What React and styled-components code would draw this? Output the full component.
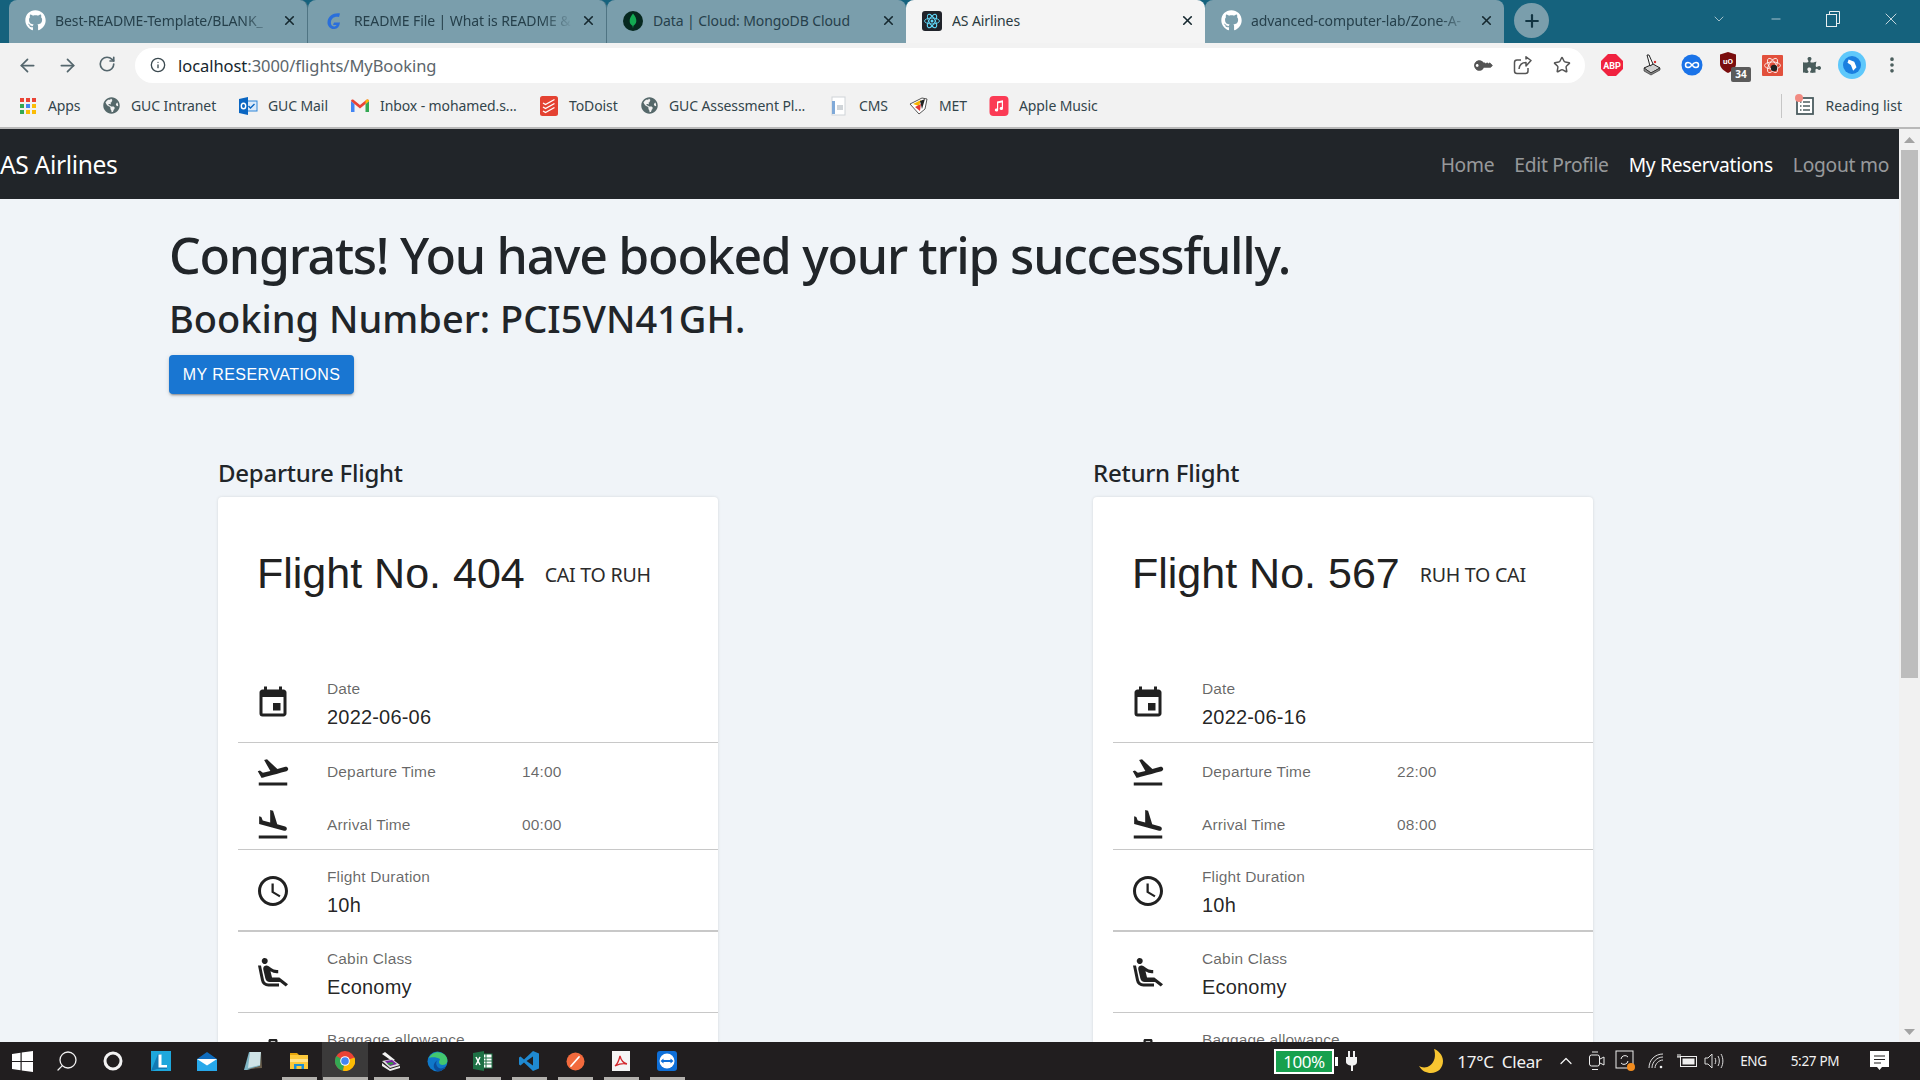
import React from "react";
import styled, { createGlobalStyle } from "styled-components";
import { ArrowLeft, ArrowRight, RotateCw, Search, ChevronUp, ChevronDown, Minus, X, Plus, Star, Info, MoreVertical } from "lucide-react";
import { FaGithub, FaGlobeAmericas, FaKey, FaPuzzlePiece } from "react-icons/fa";
import {
  MdEvent,
  MdFlightTakeoff,
  MdFlightLand,
  MdAccessTime,
  MdAirlineSeatReclineExtra,
  MdLuggage,
} from "react-icons/md";

const uiFont = `"Noto Sans", "Open Sans", sans-serif`;
const cardFont = `"Liberation Sans", Arial, sans-serif`;

const GlobalStyle = createGlobalStyle`
  html, body {
    margin: 0;
    padding: 0;
    height: 100%;
    overflow: hidden;
    background: #f0f4f8;
  }
  * { box-sizing: border-box; }
`;

const Screen = styled.div`
  width: 1920px;
  height: 1080px;
  display: flex;
  flex-direction: column;
  overflow: hidden;
  font-family: ${uiFont};
`;

/* browser chrome */
const TabStrip = styled.div`
  height: 43px;
  flex: none;
  background: #15627d;
  display: flex;
  padding-left: 9px;
`;

const Tab = styled.div`
  width: 299px;
  height: 43px;
  display: flex;
  align-items: center;
  padding: 0 0 2px 15px;
  position: relative;
  border-radius: 8px 8px 0 0;
  background: ${(p) => (p.$active ? "#f4f4f4" : "#7a9eac")};
  color: ${(p) => (p.$active ? "#2b3a40" : "#26404b")};
  &:not(:last-of-type) {
    border-right: ${(p) => (p.$sep ? "1px solid #4f7483" : "none")};
  }
`;

const TabIcon = styled.div`
  width: 22px;
  height: 22px;
  flex: none;
  display: flex;
  align-items: center;
  justify-content: center;
  color: #fff;
`;

const TabTitle = styled.div`
  margin-left: 9px;
  width: 219px;
  font-size: 14px;
  letter-spacing: -0.1px;
  white-space: nowrap;
  overflow: hidden;
  mask-image: ${(p) => (p.$fade ? "linear-gradient(to right, #000 86%, transparent)" : "none")};
`;

const TabClose = styled.div`
  margin-left: auto;
  margin-right: 10px;
  display: flex;
  color: #16282f;
`;

const NewTab = styled.div`
  width: 35px;
  height: 35px;
  margin: 3px 0 0 10px;
  border-radius: 50%;
  background: #7a9eac;
  display: flex;
  align-items: center;
  justify-content: center;
  color: #123543;
`;

const WindowControls = styled.div`
  margin-left: auto;
  display: flex;
  align-items: flex-start;
  color: #e8eef0;
`;

const WinButton = styled.div`
  width: ${(p) => p.$w || 58}px;
  height: 38px;
  display: flex;
  align-items: center;
  justify-content: center;
`;

const Toolbar = styled.div`
  height: 44px;
  flex: none;
  background: #f2f2f2;
  display: flex;
  align-items: center;
`;

const NavButton = styled.div`
  width: 40px;
  display: flex;
  justify-content: center;
  color: #54666d;
`;

const NavButtons = styled.div`
  display: flex;
  padding-left: 7px;
  width: 135px;
`;

const Omnibox = styled.div`
  width: 1450px;
  height: 35px;
  background: #fff;
  border-radius: 18px;
  display: flex;
  align-items: center;
  padding: 0 3px 0 15px;
  font-size: 16.5px;
  letter-spacing: -0.05px;
  color: #5c666b;
`;

const UrlHost = styled.span`
  color: #16262d;
`;

const UrlText = styled.div`
  margin-left: 12px;
`;

const OmniActions = styled.div`
  margin-left: auto;
  display: flex;
  color: #555;
`;

const OmniButton = styled.div`
  width: 40px;
  display: flex;
  justify-content: center;
  align-items: center;
`;

const Extensions = styled.div`
  display: flex;
  margin-left: 7px;
`;

const Extension = styled.div`
  width: 40px;
  height: 30px;
  display: flex;
  align-items: center;
  justify-content: center;
  position: relative;
`;

const ExtBadge = styled.div`
  position: absolute;
  left: 19px;
  top: 17px;
  width: 20px;
  height: 15px;
  border-radius: 2px;
  background: #5b5b5b;
  color: #fff;
  font-size: 10px;
  font-weight: 700;
  line-height: 15px;
  text-align: center;
`;

const Avatar = styled.div`
  width: 28px;
  height: 28px;
  border-radius: 50%;
  background: #5ec8fb;
  display: flex;
  align-items: center;
  justify-content: center;
`;

const Bookmarks = styled.div`
  height: 42px;
  flex: none;
  background: #f2f2f2;
  border-bottom: 2px solid #b9b9b9;
  display: flex;
  align-items: center;
  padding: 0 0 3px 18px;
`;

const Bookmark = styled.div`
  display: flex;
  align-items: center;
  margin-right: 20px;
  font-size: 14px;
  letter-spacing: -0.1px;
  color: #33454c;
`;

const BookmarkIcon = styled.div`
  width: 20px;
  height: 20px;
  display: flex;
  align-items: center;
  justify-content: center;
  margin-right: 10px;
  color: #55686a;
`;

const BookmarkLabel = styled.div`
  width: ${(p) => p.$w}px;
  white-space: nowrap;
`;

const ReadingList = styled.div`
  margin-left: auto;
  padding-left: 13px;
  padding-right: 18px;
  height: 24px;
  border-left: 1px solid #c6c6c6;
  display: flex;
  align-items: center;
  font-size: 14px;
  letter-spacing: 0;
  color: #33454c;
  position: relative;
`;

const RedDot = styled.div`
  position: absolute;
  left: 13px;
  top: 0;
  width: 8px;
  height: 8px;
  border-radius: 50%;
  background: #f28b82;
`;

/* page */
const Viewport = styled.div`
  flex: 1;
  min-height: 0;
  display: flex;
  overflow: hidden;
`;

const Page = styled.div`
  width: 1899px;
  flex: none;
  background: #f0f4f8;
  overflow: hidden;
`;

const Navbar = styled.nav`
  height: 70px;
  background: #212529;
  display: flex;
  align-items: center;
  justify-content: space-between;
  padding-right: 10px;
`;

const Brand = styled.div`
  color: #fff;
  font-size: 24.6px;
  letter-spacing: -0.35px;
`;

const NavLinks = styled.div`
  display: flex;
  gap: 20px;
`;

const NavLink = styled.a`
  font-size: 19.2px;
  letter-spacing: -0.25px;
  color: ${(p) => (p.$current ? "#ffffff" : "rgba(255,255,255,.55)")};
`;

const Hero = styled.section`
  padding-left: 169px;
  color: #212529;
`;

const Headline = styled.h1`
  margin: 23px 0 0;
  font-size: 50px;
  line-height: 66px;
  font-weight: 500;
  letter-spacing: -1.25px;
`;

const BookingNumber = styled.h2`
  margin: 6px 0 0;
  font-size: 38px;
  line-height: 48px;
  font-weight: 500;
`;

const PrimaryButton = styled.button`
  display: block;
  margin-top: 13px;
  width: 185px;
  height: 39px;
  padding: 0;
  border: 0;
  border-radius: 4px;
  background: #1976d2;
  color: #fff;
  font-family: ${cardFont};
  font-size: 16px;
  font-weight: 400;
  letter-spacing: 0.457px;
  white-space: nowrap;
  box-shadow: 0 3px 1px -2px rgba(0,0,0,.2), 0 2px 2px 0 rgba(0,0,0,.14), 0 1px 5px 0 rgba(0,0,0,.12);
`;

const Flights = styled.div`
  display: grid;
  grid-template-columns: 500px 500px;
  column-gap: 375px;
  padding-left: 218px;
  margin-top: 60px;
`;

const FlightTitle = styled.h4`
  margin: 0;
  height: 43px;
  font-size: 24px;
  line-height: 38px;
  font-weight: 500;
  letter-spacing: -0.25px;
  color: #212529;
`;

const Card = styled.div`
  background: #fff;
  border-radius: 4px;
  box-shadow: 0 0 3px rgba(0,0,0,.12);
  padding-left: 20px;
  font-family: ${cardFont};
`;

const CardHead = styled.div`
  height: 164px;
  padding: 48px 0 0 19px;
  display: flex;
  align-items: flex-start;
  gap: 20px;
`;

const FlightNumber = styled.div`
  font-size: 43px;
  line-height: 56px;
  letter-spacing: 0;
  color: #212121;
`;

const Route = styled.div`
  font-family: ${uiFont};
  font-size: 19.6px;
  line-height: 56px;
  letter-spacing: -0.25px;
  color: #2b2b2b;
  margin-top: 2px;
`;

const Row = styled.div`
  height: ${(p) => p.$h || 81}px;
  display: flex;
  align-items: center;
  padding: 2px 0 0 17px;
  border-bottom: ${(p) => (p.$thick ? 2 : 1)}px solid #c8c8c8;
`;

const TimesRow = styled.div`
  height: 107px;
  padding: 3px 0 0 17px;
  border-bottom: 1px solid #c8c8c8;
`;

const TimeLine = styled.div`
  height: 52.5px;
  display: flex;
  align-items: center;
`;

const RowIcon = styled.div`
  width: 36px;
  height: 36px;
  margin-right: 36px;
  color: #212121;
  font-size: 36px;
  display: flex;
`;

const RowText = styled.div``;

const RowLabel = styled.div`
  font-size: 15.5px;
  line-height: 28px;
  letter-spacing: 0.15px;
  color: rgba(0,0,0,.6);
  white-space: nowrap;
  width: ${(p) => (p.$w ? `${p.$w}px` : "auto")};
`;

const RowValue = styled.div`
  min-height: 28px;
  font-size: 20px;
  line-height: 28px;
  letter-spacing: 0.19px;
  color: rgba(0,0,0,.87);
`;

const TimeValue = styled.div`
  font-size: 15.5px;
  letter-spacing: 0.15px;
  color: rgba(0,0,0,.6);
`;

const Scrollbar = styled.div`
  flex: 1;
  background: #f1f1f1;
  display: flex;
  flex-direction: column;
  align-items: center;
  justify-content: space-between;
  position: relative;
`;

const ScrollArrow = styled.div`
  height: 21px;
  flex: none;
  display: flex;
  align-items: center;
  justify-content: center;
`;

const ScrollThumb = styled.div`
  position: absolute;
  top: 21px;
  left: 2px;
  width: 17px;
  height: 528px;
  background: #bdbdbd;
`;

/* taskbar */
const Taskbar = styled.div`
  height: 38px;
  flex: none;
  background: #211e1f;
  display: flex;
  align-items: stretch;
`;

const TaskSlot = styled.div`
  width: ${(p) => p.$w || 46}px;
  margin-left: ${(p) => p.$ml || 0}px;
  display: flex;
  align-items: center;
  justify-content: center;
  position: relative;
  background: ${(p) => (p.$focus ? "#3b3a3a" : "transparent")};
  &::after {
    content: "";
    display: ${(p) => (p.$running ? "block" : "none")};
    position: absolute;
    left: ${(p) => (p.$focus ? 1 : 6)}px;
    right: ${(p) => (p.$focus ? 0 : 5)}px;
    bottom: 0;
    height: 3px;
    background: #b3b1ad;
  }
`;

const Tray = styled.div`
  margin-left: auto;
  padding-right: 15px;
  display: flex;
  align-items: center;
  color: #f2f2f2;
  font-size: 14.5px;
`;

const BatteryMeter = styled.div`
  width: 60px;
  height: 25px;
  border: 2px solid #fff;
  background: #17a04e;
  color: #fff;
  font-size: 17px;
  letter-spacing: -0.4px;
  text-align: center;
  line-height: 21px;
  position: relative;
  margin-right: 3px;
  &::after {
    content: "";
    position: absolute;
    right: -6px;
    top: 6px;
    width: 3px;
    height: 9px;
    background: #fff;
  }
`;

const TraySlot = styled.div`
  width: ${(p) => p.$w}px;
  margin-left: ${(p) => p.$ml || 0}px;
  display: flex;
  align-items: center;
  justify-content: center;
  white-space: nowrap;
  font-size: ${(p) => p.$size || 14}px;
  letter-spacing: -0.3px;
`;

/* drawn icons */
const GoogleG = () => (
  <svg width="20" height="20" viewBox="0 0 20 20">
    <path d="M16 2.5C10 1.5 4 5 3.5 11c-.3 4 3 7.5 7 7 3-.3 5-2.5 5.5-6.5H10l-1 2.5h3.5c-.5 1-1.5 1.6-2.6 1.5-2-.2-3.2-2-3-4.3C7.2 7 11 4.8 15 6z" fill="#2a6fdb" />
  </svg>
);

const MongoLeaf = () => (
  <svg width="20" height="20" viewBox="0 0 20 20">
    <circle cx="10" cy="10" r="10" fill="#06281f" />
    <path d="M10 2.5c2.7 3 3.6 5.6 3.3 8-.3 2-1.6 3.5-2.9 4.3L10 17.5l-.5-2.7C8 14 6.8 12.5 6.7 10.5 6.5 8 7.5 5.5 10 2.5z" fill="#13aa52" />
  </svg>
);

const ReactAtom = () => (
  <svg width="20" height="20" viewBox="0 0 20 20">
    <rect width="20" height="20" rx="3" fill="#20232a" />
    <g fill="none" stroke="#61dafb" strokeWidth="0.9">
      <ellipse cx="10" cy="10" rx="7.5" ry="3" />
      <ellipse cx="10" cy="10" rx="7.5" ry="3" transform="rotate(60 10 10)" />
      <ellipse cx="10" cy="10" rx="7.5" ry="3" transform="rotate(120 10 10)" />
    </g>
    <circle cx="10" cy="10" r="1.5" fill="#61dafb" />
  </svg>
);

const AppsGrid = () => (
  <svg width="18" height="18" viewBox="0 0 18 18">
    {[
      ["#ea4335", "#ea4335", "#ea4335"],
      ["#34a853", "#4285f4", "#fbbc05"],
      ["#34a853", "#fbbc05", "#fbbc05"],
    ].map((row, r) =>
      row.map((c, i) => <rect key={`${r}${i}`} x={1 + i * 6} y={1 + r * 6} width="4" height="4" fill={c} />)
    )}
  </svg>
);

const OutlookIcon = () => (
  <svg width="20" height="20" viewBox="0 0 20 20">
    <rect x="8" y="5" width="11" height="10" fill="#dbeafa" stroke="#2f86d8" />
    <path d="M10.5 10l2 2 4-4" fill="none" stroke="#0a66c2" strokeWidth="1.4" />
    <path d="M1 3l9-2v18l-9-2z" fill="#0a66c2" />
    <ellipse cx="5.5" cy="10" rx="2.2" ry="2.8" fill="none" stroke="#fff" strokeWidth="1.4" />
  </svg>
);

const GmailIcon = () => (
  <svg width="20" height="20" viewBox="0 0 20 20">
    <path d="M1 5v11h3.5V8z" fill="#4285f4" />
    <path d="M19 5v11h-3.5V8z" fill="#34a853" />
    <path d="M1 5c0-1.5 1.5-2 2.5-1.3L10 9l6.5-5.3C17.5 3 19 3.5 19 5l-3.5 3L10 12.5 4.5 8z" fill="#ea4335" />
    <path d="M15.5 4.8l1-1.1C17.5 3 19 3.5 19 5l-3.5 3z" fill="#fbbc05" />
  </svg>
);

const TodoistIcon = () => (
  <svg width="20" height="20" viewBox="0 0 20 20">
    <rect x="1" y="0" width="18" height="20" rx="2.5" fill="#e44232" />
    <path d="M4 7l2.5 1.5L15.5 3.5M4 11l2.5 1.5 9-5M4 15l2.5 1.5 9-5" fill="none" stroke="#fff" strokeWidth="1.4" />
  </svg>
);

const DocIcon = () => (
  <svg width="20" height="20" viewBox="0 0 20 20">
    <rect x="3" y="1" width="13" height="18" fill="#fff" stroke="#cfd4d8" />
    <rect x="3" y="5" width="3" height="13" fill="#7fa9d8" />
    <rect x="8" y="9" width="6" height="5" fill="#cfd4d8" />
  </svg>
);

const MetIcon = () => (
  <svg width="20" height="20" viewBox="0 0 20 20">
    <path d="M1 8l12-6 5 1-2 10-6 5z" fill="#fff" stroke="#555" />
    <path d="M4 8l8-4-2 6z" fill="#f5b400" />
    <path d="M6 11l6-3-1 7z" fill="#e53935" />
    <path d="M11 5l5-2-3 10z" fill="#222" />
  </svg>
);

const MusicIcon = () => (
  <svg width="20" height="20" viewBox="0 0 20 20">
    <rect width="19" height="20" x="0.5" rx="4" fill="#fb3b55" />
    <path d="M8 5.5l6-1.3v8.3a1.7 1.5 0 1 1-1.2-1.4V6.5L9.2 7.3v6.7a1.7 1.5 0 1 1-1.2-1.4z" fill="#fff" />
  </svg>
);

const ReadingIcon = () => (
  <svg width="20" height="20" viewBox="0 0 20 20">
    <rect x="2" y="2" width="16" height="16" fill="#fff" stroke="#4c5d60" strokeWidth="1.8" />
    <path d="M5 6h1.5M8 6h7M5 10h1.5M8 10h7M5 14h1.5M8 14h7" stroke="#4c5d60" strokeWidth="1.6" />
  </svg>
);

const ShareIcon = () => (
  <svg width="19" height="19" viewBox="0 0 19 19" fill="none" stroke="#555" strokeWidth="1.5">
    <path d="M8 4H4a2.5 2.5 0 0 0-2.5 2.5V15A2.5 2.5 0 0 0 4 17.5h8.5A2.5 2.5 0 0 0 15 15v-3" />
    <path d="M6 13c.5-4 3-6.5 7-6.5V10l5-5.5L13 0.8V3.5" strokeLinejoin="round" />
  </svg>
);

const AbpIcon = () => (
  <svg width="22" height="22" viewBox="0 0 22 22">
    <path d="M7 0h8l7 7v8l-7 7H7l-7-7V7z" fill="#f0223f" />
    <text x="11" y="14.5" textAnchor="middle" fontFamily="Roboto, sans-serif" fontSize="9" fontWeight="700" fill="#fff">ABP</text>
  </svg>
);

const JoystickIcon = () => (
  <svg width="20" height="22" viewBox="0 0 20 22">
    <path d="M2 14l9-4 7 4-9 5z" fill="#cfcfcf" stroke="#222" />
    <path d="M2 14v3l7 4 9-5v-2l-9 5z" fill="#888" stroke="#222" strokeWidth="0.6" />
    <path d="M5 1l2 0 4 9-3 2z" fill="#fff" stroke="#222" />
    <circle cx="13" cy="8" r="1.2" fill="#d32f2f" />
  </svg>
);

const LoopIcon = () => (
  <svg width="22" height="22" viewBox="0 0 22 22">
    <circle cx="11" cy="11" r="10.5" fill="#1a73e8" />
    <path d="M11 11c-1.5-2-2.5-2.5-4-2.5a2.5 2.5 0 0 0 0 5c1.5 0 2.5-.5 4-2.5s2.5-2.5 4-2.5a2.5 2.5 0 0 1 0 5c-1.5 0-2.5-.5-4-2.5z" fill="none" stroke="#fff" strokeWidth="1.5" />
  </svg>
);

const UblockIcon = () => (
  <svg width="20" height="22" viewBox="0 0 20 22" style={{ marginRight: 8, marginTop: -4 }}>
    <path d="M10 0l8 2.5V12c0 4-4 7-8 9-4-2-8-5-8-9V2.5z" fill="#7a0d0d" />
    <text x="10" y="12" textAnchor="middle" fontFamily="Roboto, sans-serif" fontSize="8" fontWeight="700" fill="#fff">uO</text>
  </svg>
);

const RedAtomIcon = () => (
  <svg width="21" height="21" viewBox="0 0 21 21">
    <rect width="21" height="21" rx="1" fill="#e2503c" />
    <g fill="none" stroke="#fff" strokeWidth="0.8">
      <ellipse cx="10.5" cy="10.5" rx="8" ry="3.5" />
      <ellipse cx="10.5" cy="10.5" rx="8" ry="3.5" transform="rotate(60 10.5 10.5)" />
      <ellipse cx="10.5" cy="10.5" rx="8" ry="3.5" transform="rotate(120 10.5 10.5)" />
    </g>
    <circle cx="12" cy="13" r="3.2" fill="#222" />
  </svg>
);

const WindowsLogo = () => (
  <svg width="21" height="21" viewBox="0 0 21 21">
    <path d="M0 3l8.5-1.2v8.2H0zM9.7 1.6L21 0v10H9.7zM0 11h8.5v8.2L0 18zM9.7 11H21v10L9.7 19.4z" fill="#fff" />
  </svg>
);

const Ring = () => (
  <svg width="20" height="20" viewBox="0 0 20 20">
    <circle cx="10" cy="10" r="8" fill="none" stroke="#f2f2f2" strokeWidth="3" />
  </svg>
);

const LauncherIcon = () => (
  <svg width="20" height="20" viewBox="0 0 20 20">
    <rect width="20" height="20" fill="#1ea7dc" />
    <path d="M0 20L7 3h3v12h6v3H6z" fill="#0b5c99" opacity="0.6" />
    <path d="M7.5 3.5h3v10.5h5.5v2.5H7.5z" fill="#fff" />
  </svg>
);

const MailIcon = () => (
  <svg width="20" height="19" viewBox="0 0 20 19">
    <path d="M10 0l10 7v12H0V7z" fill="#0f6cbd" />
    <path d="M0 7h20v12H0z" fill="#27a8ea" />
    <path d="M0 7h20l-10 6.5z" fill="#fff" />
  </svg>
);

const NotesIcon = () => (
  <svg width="20" height="20" viewBox="0 0 20 20">
    <path d="M6 1h12v14l-14 4H1z" fill="#7fb5c4" />
    <path d="M7 1h11l-1 13-12 3z" fill="#cfe3e6" />
    <path d="M18 1l1 16-14 1 12-3z" fill="#6b5f4c" />
  </svg>
);

const FolderIcon = () => (
  <svg width="19" height="18" viewBox="0 0 19 18">
    <path d="M0 1h7l2 2h-9z" fill="#e5a50a" />
    <rect y="3" width="18" height="14" fill="#fcc93b" />
    <rect y="7" width="18" height="3" fill="#ffe28a" />
    <path d="M4 17v-5h10v5h-2.5v-3h-5v3z" fill="#1b8fd6" />
  </svg>
);

const ChromeIcon = () => (
  <svg width="20" height="20" viewBox="0 0 20 20">
    <circle cx="10" cy="10" r="10" fill="#ea4335" />
    <path d="M10 10L1.3 5A10 10 0 0 0 8 19.8z" fill="#34a853" />
    <path d="M10 10l-2 9.8A10 10 0 0 0 19.5 6.5z" fill="#fbbc05" />
    <circle cx="10" cy="10" r="4.8" fill="#fff" />
    <circle cx="10" cy="10" r="3.8" fill="#4285f4" />
  </svg>
);

const ScannerIcon = () => (
  <svg width="20" height="20" viewBox="0 0 20 20">
    <path d="M1 3l3-2 10 8-3 1z" fill="#f4f4f4" />
    <path d="M1 10l10-2 8 6-10 3z" fill="#ddd" />
    <path d="M4 10l7-1 5 4-7 2z" fill="#7a1fa2" />
    <path d="M6 12l5-1 2 2-5 1z" fill="#2e9e3b" />
    <path d="M1 12l8 6 10-3v2l-10 3-8-5z" fill="#eee" />
  </svg>
);

const EdgeIcon = () => (
  <svg width="21" height="21" viewBox="0 0 21 21">
    <circle cx="10.5" cy="10.5" r="10" fill="#0f78c9" />
    <path d="M2 7C4 1 13-1 18 4c3 3 3 7 1 9-3 2-7 1-7-2 0-1 1-2 1-3-3-2-9-2-11-1z" fill="#43c76f" />
    <path d="M11 9c-3 2-2 6 1 8 2 1 5 0 7-2-2 4-6 6-9 5 -4-2-5-8 1-11z" fill="#0b4f9c" />
  </svg>
);

const ExcelIcon = () => (
  <svg width="20" height="20" viewBox="0 0 20 20">
    <rect x="8" y="3" width="11" height="14" fill="#fff" stroke="#1e7145" />
    <path d="M8 7h11M8 10h11M8 13h11M13 3v14" stroke="#1e7145" />
    <path d="M0 2l11-2v20L0 18z" fill="#1e7145" />
    <path d="M3 6l4 8M7 6l-4 8" stroke="#fff" strokeWidth="1.5" />
  </svg>
);

const VsCodeIcon = () => (
  <svg width="20" height="20" viewBox="0 0 20 20">
    <path d="M14 0l6 2.5v15L14 20 5 11.5 1.5 14.5 0 13.5V6.5l1.5-1L5 8.5z" fill="#1f8ad2" />
    <path d="M14 5.5L7.5 10l6.5 4.5z" fill="#211e1f" />
  </svg>
);

const OrangeIcon = () => (
  <svg width="19" height="19" viewBox="0 0 19 19">
    <circle cx="9.5" cy="9.5" r="9" fill="#f26a3d" />
    <path d="M5 14l8-9" stroke="#fff" strokeWidth="1.8" strokeLinecap="round" />
  </svg>
);

const PdfIcon = () => (
  <svg width="18" height="20" viewBox="0 0 18 20">
    <rect width="18" height="20" fill="#f5f5f5" />
    <path d="M3 15c3-2 4-6 5-10 1 4 3 7 7 8-4-1-8 0-12 2z" fill="none" stroke="#d3272c" strokeWidth="1.3" />
  </svg>
);

const TeamViewerIcon = () => (
  <svg width="20" height="20" viewBox="0 0 20 20">
    <rect width="20" height="20" rx="3" fill="#0e6fd8" />
    <circle cx="10" cy="10" r="7.5" fill="#fff" />
    <path d="M3.5 10l3-2.5v1.5h7V7.5l3 2.5-3 2.5V11h-7v1.5z" fill="#0e6fd8" />
  </svg>
);

const MoonIcon = () => (
  <svg width="24" height="24" viewBox="0 0 24 24">
    <path d="M15 0c4 1 9 6 9 12 0 7-5 12-12 12-5 0-9-2-12-7 3 2 8 2 11-.5C16 13 17 6 15 0z" fill="#f7c531" />
  </svg>
);

const PlugIcon = () => (
  <svg width="11" height="20" viewBox="0 0 11 20">
    <path d="M2 0h2v6h3V0h2v6h2v5c0 2-2 3.5-4 3.5V20H5v-5.5C3 14.5 0 13 0 11V6h2z" fill="#f2f2f2" />
  </svg>
);

const CameraTray = () => (
  <svg width="16" height="20" viewBox="0 0 16 20" fill="none" stroke="#eee">
    <rect x="0.5" y="4" width="10" height="11" rx="2" />
    <path d="M11 8l4-2v8l-4-2M3 1h6M3 18.5h6" />
  </svg>
);

const SyncTray = () => (
  <svg width="21" height="24" viewBox="0 0 21 24">
    <rect x="1" y="2" width="17" height="17" fill="none" stroke="#eee" />
    <path d="M6 10a4 4 0 0 1 7-2M13 12a4 4 0 0 1-7 2" fill="none" stroke="#eee" />
    <circle cx="16" cy="18" r="4" fill="#f28c1e" />
  </svg>
);

const WifiTray = () => (
  <svg width="16" height="16" viewBox="0 0 16 16" fill="none" stroke="#ddd">
    <path d="M1 15C1 7 7 1 15 1M4 15c0-6 5-11 11-11M7 15c0-4 4-8 8-8" />
    <circle cx="13" cy="14" r="1.3" fill="#eee" stroke="none" />
  </svg>
);

const BatteryTray = () => (
  <svg width="20" height="14" viewBox="0 0 20 14">
    <rect x="3.5" y="2.5" width="16" height="10" fill="none" stroke="#eee" />
    <rect x="5.5" y="4.5" width="12" height="6" fill="#eee" />
    <path d="M1 0v3M3 0v3M0 3h4" stroke="#eee" />
  </svg>
);

const VolumeTray = () => (
  <svg width="20" height="18" viewBox="0 0 20 18" fill="none" stroke="#ddd">
    <path d="M1 6h3l4-4v14l-4-4H1z" />
    <path d="M11 6c1 2 1 4 0 6M14 4c1.8 3 1.8 7 0 10M17 2c2.5 4 2.5 10 0 14" />
  </svg>
);

const NotifyTray = () => (
  <svg width="19" height="20" viewBox="0 0 19 20">
    <path d="M0 0h19v16h-7l-2.5 3L7 16H0z" fill="#fff" />
    <path d="M4 5h11M4 8.5h11M4 12h7" stroke="#211e1f" />
  </svg>
);

const Triangle = ({ down }) => (
  <svg width="11" height="6" viewBox="0 0 11 6">
    <path d={down ? "M0 0h11L5.5 6z" : "M0 6h11L5.5 0z"} fill="#a3a3a3" />
  </svg>
);

const tabs = [
  { title: "Best-README-Template/BLANK_", icon: <FaGithub size={21} />, sep: true, fade: true },
  { title: "README File | What is README &", icon: <GoogleG />, sep: true, fade: true },
  { title: "Data | Cloud: MongoDB Cloud", icon: <MongoLeaf /> },
  { title: "AS Airlines", icon: <ReactAtom />, active: true },
  { title: "advanced-computer-lab/Zone-A-", icon: <FaGithub size={21} />, fade: true },
];

const bookmarks = [
  { label: "Apps", w: 33, icon: <AppsGrid /> },
  { label: "GUC Intranet", w: 87, icon: <FaGlobeAmericas size={17} /> },
  { label: "GUC Mail", w: 62, icon: <OutlookIcon /> },
  { label: "Inbox - mohamed.s...", w: 139, icon: <GmailIcon /> },
  { label: "ToDoist", w: 50, icon: <TodoistIcon /> },
  { label: "GUC Assessment Pl...", w: 140, icon: <FaGlobeAmericas size={17} /> },
  { label: "CMS", w: 30, icon: <DocIcon /> },
  { label: "MET", w: 30, icon: <MetIcon /> },
  { label: "Apple Music", w: 82, icon: <MusicIcon /> },
];

const tasks = [
  { icon: <LauncherIcon />, ml: 2 },
  { icon: <MailIcon /> },
  { icon: <NotesIcon /> },
  { icon: <FolderIcon />, running: true },
  { icon: <ChromeIcon />, running: true, focus: true },
  { icon: <ScannerIcon />, running: true },
  { icon: <EdgeIcon /> },
  { icon: <ExcelIcon />, running: true },
  { icon: <VsCodeIcon />, running: true },
  { icon: <OrangeIcon />, running: true },
  { icon: <PdfIcon />, running: true },
  { icon: <TeamViewerIcon />, running: true },
];

const FlightCard = ({ flight }) => (
  <div>
    <FlightTitle>{flight.title}</FlightTitle>
    <Card>
      <CardHead>
        <FlightNumber>Flight No. {flight.number}</FlightNumber>
        <Route>{flight.route}</Route>
      </CardHead>
      <Row $h={82}>
        <RowIcon><MdEvent /></RowIcon>
        <RowText>
          <RowLabel>Date</RowLabel>
          <RowValue>{flight.date}</RowValue>
        </RowText>
      </Row>
      <TimesRow>
        <TimeLine>
          <RowIcon><MdFlightTakeoff /></RowIcon>
          <RowLabel $w={195}>Departure Time</RowLabel>
          <TimeValue>{flight.departs}</TimeValue>
        </TimeLine>
        <TimeLine>
          <RowIcon><MdFlightLand /></RowIcon>
          <RowLabel $w={195}>Arrival Time</RowLabel>
          <TimeValue>{flight.arrives}</TimeValue>
        </TimeLine>
      </TimesRow>
      <Row $h={82} $thick>
        <RowIcon><MdAccessTime /></RowIcon>
        <RowText>
          <RowLabel>Flight Duration</RowLabel>
          <RowValue>10h</RowValue>
        </RowText>
      </Row>
      <Row $h={81}>
        <RowIcon><MdAirlineSeatReclineExtra /></RowIcon>
        <RowText>
          <RowLabel>Cabin Class</RowLabel>
          <RowValue>Economy</RowValue>
        </RowText>
      </Row>
      <Row $h={81}>
        <RowIcon><MdLuggage /></RowIcon>
        <RowText>
          <RowLabel>Baggage allowance</RowLabel>
          <RowValue />
        </RowText>
      </Row>
    </Card>
  </div>
);

const flights = [
  { title: "Departure Flight", number: 404, route: "CAI TO RUH", date: "2022-06-06", departs: "14:00", arrives: "00:00" },
  { title: "Return Flight", number: 567, route: "RUH TO CAI", date: "2022-06-16", departs: "22:00", arrives: "08:00" },
];

export default function App() {
  return (
    <Screen>
      <GlobalStyle />
      <TabStrip>
        {tabs.map((t) => (
          <Tab key={t.title} $active={t.active} $sep={t.sep}>
            <TabIcon>{t.icon}</TabIcon>
            <TabTitle $fade={t.fade}>{t.title}</TabTitle>
            <TabClose><X size={15} strokeWidth={2.6} /></TabClose>
          </Tab>
        ))}
        <NewTab><Plus size={20} strokeWidth={2.6} /></NewTab>
        <WindowControls>
          <WinButton $w={58}><ChevronDown size={16} strokeWidth={1} /></WinButton>
          <WinButton $w={56}><Minus size={14} strokeWidth={1.2} /></WinButton>
          <WinButton $w={58}>
            <svg width="14" height="16" viewBox="0 0 14 16" fill="none" stroke="#e8eef0">
              <rect x="0.5" y="3.5" width="10" height="12" />
              <path d="M3.5 3.5V.5h10v12h-3" />
            </svg>
          </WinButton>
          <WinButton $w={58}><X size={20} strokeWidth={1} /></WinButton>
        </WindowControls>
      </TabStrip>

      <Toolbar>
        <NavButtons>
          <NavButton><ArrowLeft size={21} /></NavButton>
          <NavButton><ArrowRight size={21} /></NavButton>
          <NavButton><RotateCw size={18} strokeWidth={2.2} /></NavButton>
        </NavButtons>
        <Omnibox>
          <Info size={16} color="#3c4a50" strokeWidth={2} />
          <UrlText><UrlHost>localhost</UrlHost>:3000/flights/MyBooking</UrlText>
          <OmniActions>
            <OmniButton><FaKey size={15} style={{ transform: "rotate(225deg)" }} /></OmniButton>
            <OmniButton><ShareIcon /></OmniButton>
            <OmniButton><Star size={18} strokeWidth={2} /></OmniButton>
          </OmniActions>
        </Omnibox>
        <Extensions>
          <Extension><AbpIcon /></Extension>
          <Extension><JoystickIcon /></Extension>
          <Extension><LoopIcon /></Extension>
          <Extension><UblockIcon /><ExtBadge>34</ExtBadge></Extension>
          <Extension><RedAtomIcon /></Extension>
          <Extension><FaPuzzlePiece size={18} color="#4a5d5c" /></Extension>
          <Extension><Avatar><svg width="18" height="18" viewBox="0 0 16 16"><circle cx="8" cy="8" r="8" fill="#1a7fe0" /><path d="M5 3l5 2 2 5-3 3-2-5-3-2z" fill="#fff" /></svg></Avatar></Extension>
          <Extension><MoreVertical size={20} color="#4a5d5c" strokeWidth={2.4} /></Extension>
        </Extensions>
      </Toolbar>

      <Bookmarks>
        {bookmarks.map((b) => (
          <Bookmark key={b.label}>
            <BookmarkIcon>{b.icon}</BookmarkIcon>
            <BookmarkLabel $w={b.w}>{b.label}</BookmarkLabel>
          </Bookmark>
        ))}
        <ReadingList>
          <RedDot />
          <BookmarkIcon><ReadingIcon /></BookmarkIcon>
          Reading list
        </ReadingList>
      </Bookmarks>

      <Viewport>
        <Page>
          <Navbar>
            <Brand>AS Airlines</Brand>
            <NavLinks>
              <NavLink>Home</NavLink>
              <NavLink>Edit Profile</NavLink>
              <NavLink $current>My Reservations</NavLink>
              <NavLink>Logout mo</NavLink>
            </NavLinks>
          </Navbar>
          <Hero>
            <Headline>Congrats! You have booked your trip successfully.</Headline>
            <BookingNumber>Booking Number: PCI5VN41GH.</BookingNumber>
            <PrimaryButton>MY RESERVATIONS</PrimaryButton>
          </Hero>
          <Flights>
            {flights.map((f) => (
              <FlightCard key={f.number} flight={f} />
            ))}
          </Flights>
        </Page>
        <Scrollbar>
          <ScrollArrow><Triangle /></ScrollArrow>
          <ScrollThumb />
          <ScrollArrow><Triangle down /></ScrollArrow>
        </Scrollbar>
      </Viewport>

      <Taskbar>
        <TaskSlot $w={44}><WindowsLogo /></TaskSlot>
        <TaskSlot><Search size={24} color="#f2f2f2" strokeWidth={1.3} style={{ transform: "scaleX(-1)" }} /></TaskSlot>
        <TaskSlot><Ring /></TaskSlot>
        {tasks.map((t, i) => (
          <TaskSlot key={i} $ml={t.ml} $running={t.running} $focus={t.focus}>
            {t.icon}
          </TaskSlot>
        ))}
        <Tray>
          <BatteryMeter>100%</BatteryMeter>
          <TraySlot $w={28}><PlugIcon /></TraySlot>
          <TraySlot $w={32} $ml={50}><MoonIcon /></TraySlot>
          <TraySlot $w={105} $size={17}>17°C&nbsp; Clear</TraySlot>
          <TraySlot $w={28}><ChevronUp size={20} strokeWidth={1.5} /></TraySlot>
          <TraySlot $w={34}><CameraTray /></TraySlot>
          <TraySlot $w={22}><SyncTray /></TraySlot>
          <TraySlot $w={40}><WifiTray /></TraySlot>
          <TraySlot $w={22}><BatteryTray /></TraySlot>
          <TraySlot $w={32}><VolumeTray /></TraySlot>
          <TraySlot $w={47} $size={13.5}>ENG</TraySlot>
          <TraySlot $w={76} $size={13.5}>5:27 PM</TraySlot>
          <TraySlot $w={52}><NotifyTray /></TraySlot>
        </Tray>
      </Taskbar>
    </Screen>
  );
}
